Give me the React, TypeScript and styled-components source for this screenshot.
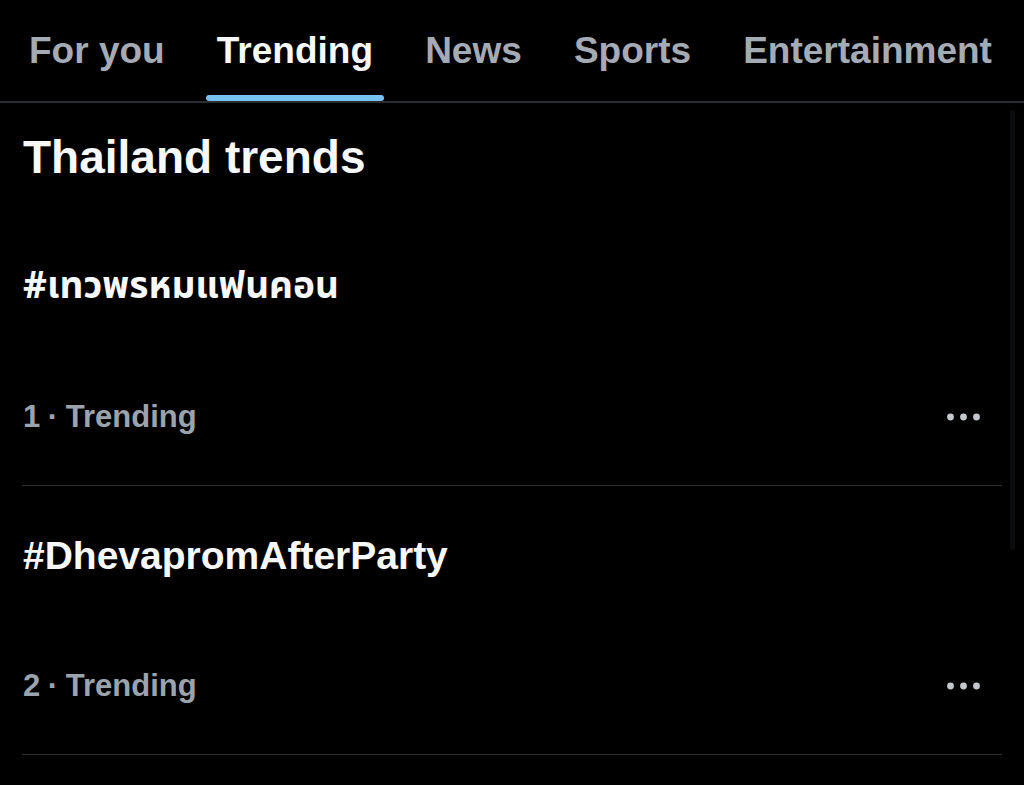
import React from "react";
import styled, { createGlobalStyle } from "styled-components";

const GlobalStyle = createGlobalStyle`
  html, body {
    margin: 0;
    padding: 0;
    background: #000;
  }
  body {
    font-family: "Liberation Sans", "Noto Sans", Arial, sans-serif;
    -webkit-font-smoothing: antialiased;
  }
`;

const Screen = styled.div`
  position: relative;
  width: 1024px;
  height: 785px;
  overflow: hidden;
  background: #000;
  color: #f2f3f4;
`;

const TabBar = styled.nav`
  display: flex;
  justify-content: space-between;
  align-items: stretch;
  height: 101px;
  padding: 0 21px 0 18px;
  border-bottom: 2px solid #2a2d30;
`;

const Tab = styled.div<{ $active?: boolean }>`
  position: relative;
  display: flex;
  align-items: center;
  padding: 0 11px;
  font-size: 37px;
  line-height: 1;
  font-weight: 700;
  color: ${(p) => (p.$active ? "#f7f8f9" : "#a4abb4")};
  white-space: nowrap;
`;

const Indicator = styled.span`
  position: absolute;
  left: 0;
  right: 0;
  bottom: 0;
  height: 6px;
  border-radius: 3px;
  background: #78c2f1;
`;

const Heading = styled.h1`
  margin: 0;
  padding: 32px 23px 0;
  margin-bottom: 37px;
  font-size: 46px;
  line-height: 45px;
  font-weight: 700;
  color: #f7f8f9;
`;

const List = styled.div`
  display: flex;
  flex-direction: column;
  padding: 0 22px;
`;

const Row = styled.div`
  display: flex;
  flex-direction: column;
  gap: 90px;
  padding: 50px 22px 48px 1px;
  border-bottom: 1px solid #2a2d30;
`;

const Title = styled.div<{ $thai?: boolean }>`
  font-family: ${(p) =>
    p.$thai
      ? `"Noto Sans Thai", "Noto Sans Thai UI", "Noto Sans", "Liberation Sans", sans-serif`
      : `"Liberation Sans", "Noto Sans", Arial, sans-serif`};
  font-size: ${(p) => (p.$thai ? "37px" : "39px")};
  line-height: 40px;
  height: 40px;
  font-weight: 700;
  color: #f7f8f9;
  white-space: nowrap;
`;

const MetaLine = styled.div`
  display: flex;
  align-items: center;
  justify-content: space-between;
  height: 40px;
`;

const Meta = styled.span`
  font-size: 31px;
  line-height: 40px;
  font-weight: 700;
  color: #9ba3ad;
`;

const Dot = styled.span`
  margin: 0 -1px;
`;

const MoreButton = styled.button`
  display: flex;
  align-items: center;
  padding: 0;
  border: 0;
  background: transparent;
  cursor: pointer;
`;

const ScrollTrack = styled.div`
  position: absolute;
  left: 1010px;
  top: 110px;
  width: 5px;
  height: 440px;
  border-radius: 3px;
  background: #0b0c0d;
`;

const MoreIcon = () => (
  <svg width="33" height="8" viewBox="0 0 33 8" aria-hidden="true">
    <circle cx="3.5" cy="4" r="3.4" fill="#c4c8cd" />
    <circle cx="16.5" cy="4" r="3.4" fill="#c4c8cd" />
    <circle cx="29.5" cy="4" r="3.4" fill="#c4c8cd" />
  </svg>
);

const tabs = ["For you", "Trending", "News", "Sports", "Entertainment"];

const trends = [
  { rank: 1, name: "#เทวพรหมแฟนคอน", thai: true },
  { rank: 2, name: "#DhevapromAfterParty", thai: false },
];

export default function App() {
  return (
    <Screen>
      <GlobalStyle />
      <TabBar>
        {tabs.map((t) => (
          <Tab key={t} $active={t === "Trending"}>
            {t}
            {t === "Trending" && <Indicator />}
          </Tab>
        ))}
      </TabBar>
      <Heading>Thailand trends</Heading>
      <List>
        {trends.map((tr) => (
          <Row key={tr.rank}>
            <Title $thai={tr.thai}>{tr.name}</Title>
            <MetaLine>
              <Meta>
                {tr.rank}
                <Dot> · </Dot>Trending
              </Meta>
              <MoreButton aria-label="More">
                <MoreIcon />
              </MoreButton>
            </MetaLine>
          </Row>
        ))}
      </List>
      <ScrollTrack />
    </Screen>
  );
}
